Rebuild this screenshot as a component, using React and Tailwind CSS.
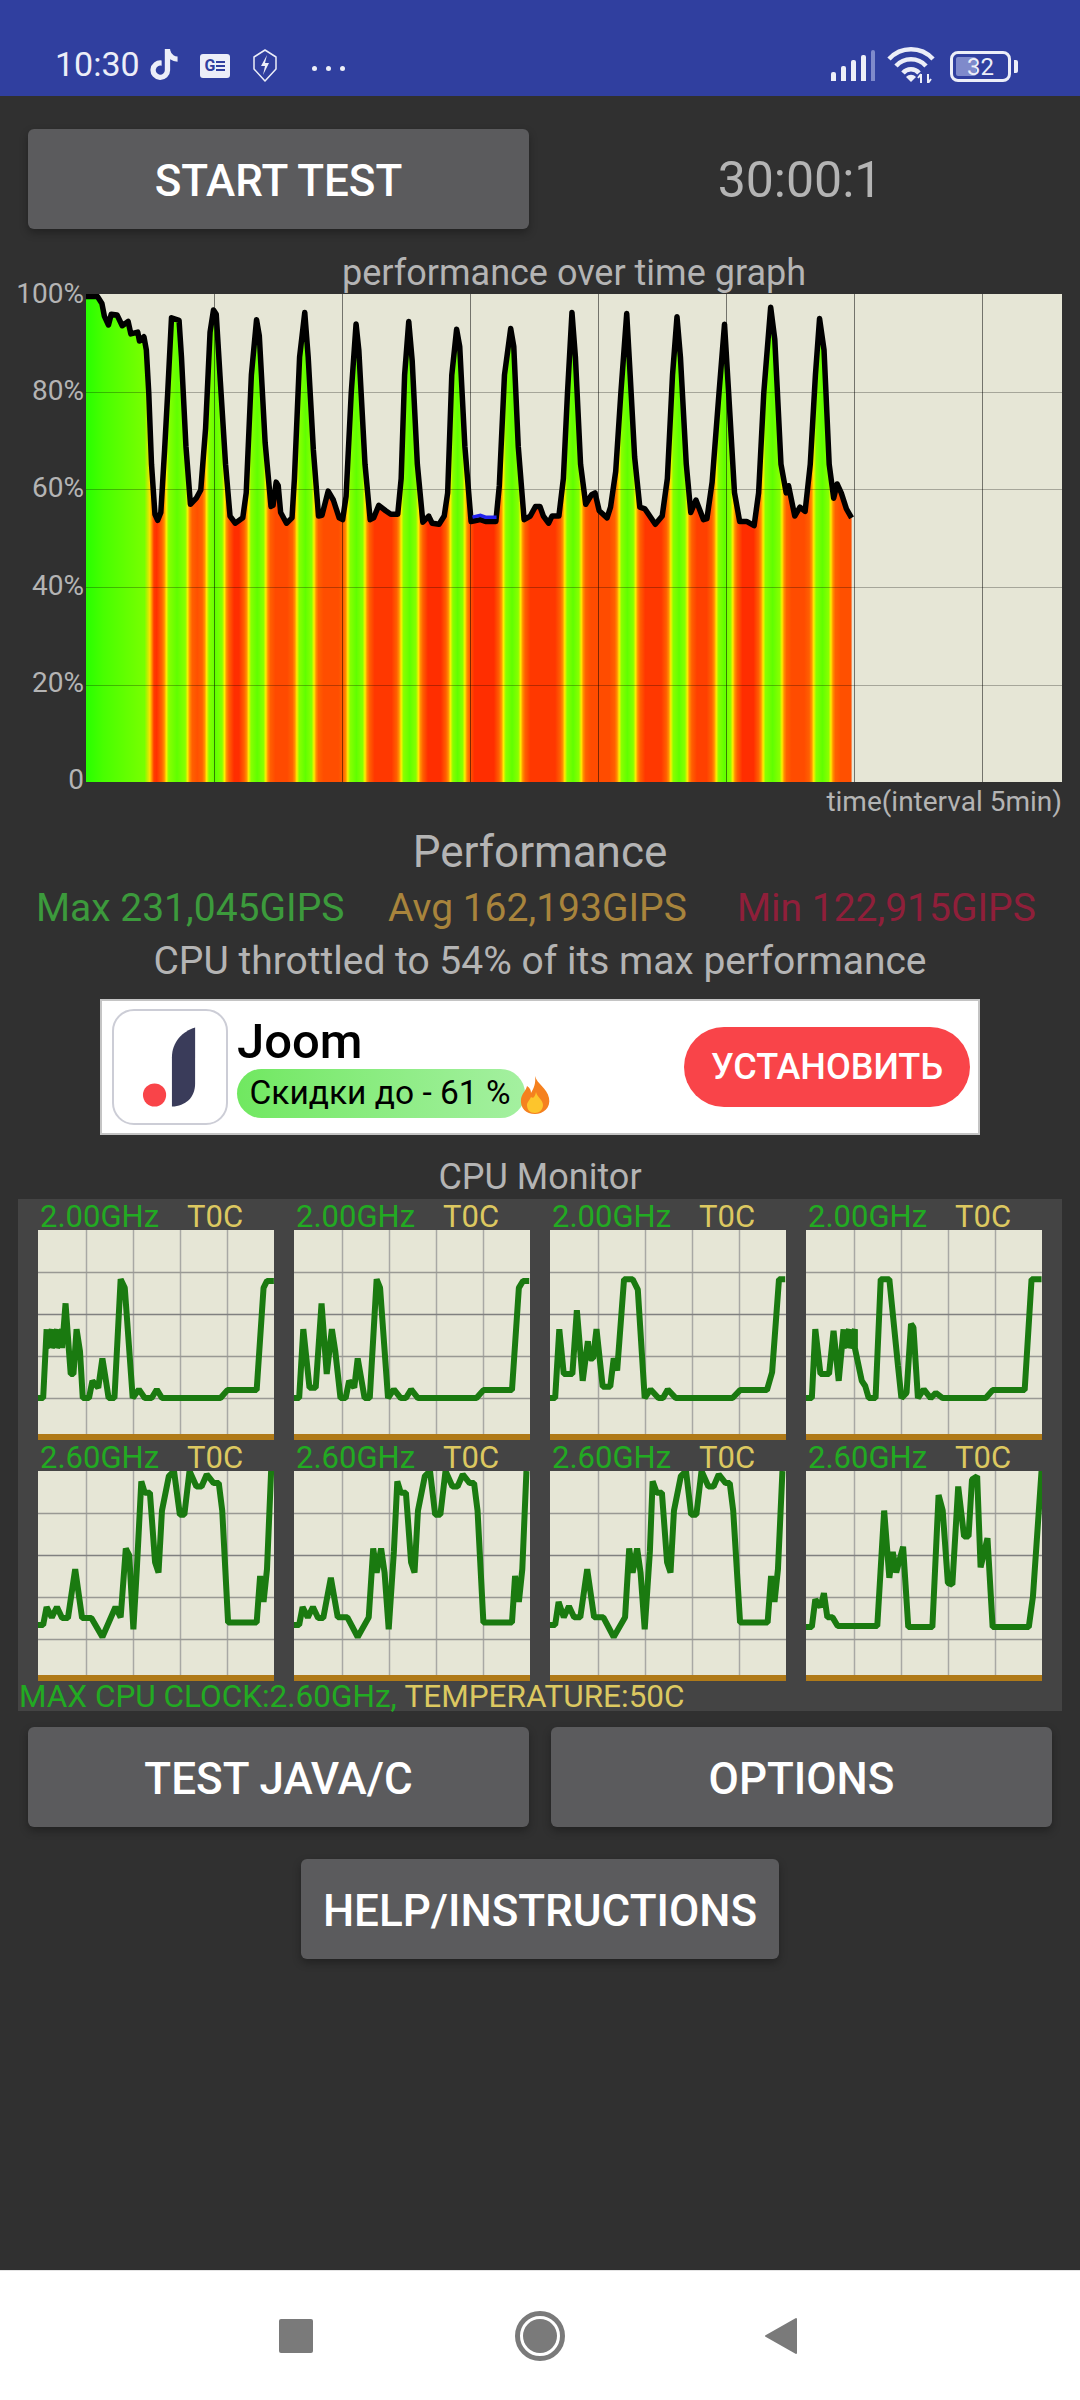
import { FaTiktok } from 'react-icons/fa'

const left = [249,130,283,130,296,150,303,185,315,210,323,180,340,182,355,212,372,200,380,235,400,230,405,255,418,243,425,280,432,400,440,600,450,740,458,757,467,735,478,560,487,400,498,190,520,197,527,300,540,550,553,712,570,695,583,672,597,500,610,230,620,168,628,180,640,370,655,600,668,745,683,765,705,750,715,680,730,350,745,195,753,240,770,540,787,718,793,715,802,650,808,660,815,735,832,765,848,750,855,640,870,300,885,175,895,300,910,560,925,745,935,743,953,675,968,700,985,750,995,755,1005,690,1020,400,1034,207,1042,280,1060,600,1075,755,1085,750,1100,715,1120,730,1135,740,1155,740,1165,640,1175,350,1187,200,1197,310,1212,600,1228,762,1245,745,1255,765,1275,768,1290,745,1300,680,1312,350,1326,222,1335,270,1350,550,1368,760,1395,755,1410,760,1440,760,1450,660,1465,350,1483,220,1492,270,1505,550,1522,755,1540,745,1555,718]
const right = [0,718,10,745,25,765,35,745,55,745,68,640,80,400,93,175,103,300,118,600,133,712,150,685,160,680,172,730,195,750,205,720,220,620,235,400,252,178,262,350,275,580,290,720,305,725,335,768,355,745,370,640,385,350,398,187,408,300,425,600,438,735,453,700,465,730,475,755,485,752,500,650,520,400,536,208,548,400,565,680,580,760,600,760,622,772,635,680,650,400,670,160,682,250,700,600,715,680,722,660,740,745,755,720,770,732,785,600,800,350,812,192,825,280,840,600,853,695,863,655,875,680,890,725,905,750]

// yellow flank left, yellow flank right, colour of the valley after it
const bands = [
  [483, 545, '#ff5000'], [600, 652, '#ff2e00'], [722, 772, '#ff4a00'], [862, 912, '#ff4e00'],
  [1010, 1060, '#ff3800'], [1165, 1215, '#ff2e00'], [1308, 1350, '#ff2e00'], [1462, 1512, '#ff3800'],
  [1640, 1688, '#ff4c00'], [1798, 1846, '#ff3800'], [1948, 1996, '#ff4000'], [2080, 2128, '#ff2e00'],
  [2216, 2271, '#ff4c00'], [2363, 2413, '#ff5000'],
]

const toPlot = (zx, zy) => [zx / 2.904 - 86, 250 + zy / 2.8 - 294]

function perfLine() {
  const pts = []
  for (let i = 0; i < left.length; i += 2) pts.push(toPlot(left[i], left[i + 1]))
  for (let i = 0; i < right.length; i += 2) pts.push(toPlot(right[i] + 1568, right[i + 1]))
  return pts
}

function stops() {
  const out = [[249, '#28ff00'], [300, '#48ff00'], [420, '#78ff00'], [435, '#ffe000'], [447, '#ff3c00']]
  let valley = '#ff3000'
  bands.forEach(([a, b, after]) => {
    out.push([a - 28, valley], [a - 13, '#ff6000'], [a - 6, '#ff9000'], [a, '#ffee00'], [a + 7, '#88ff00'], [(a + b) / 2, '#60ff00'], [b - 7, '#88ff00'], [b, '#ffee00'], [b + 6, '#ff9000'], [b + 13, '#ff6000'], [b + 28, after])
    valley = after
  })
  return out
}

function PerfGraph() {
  const pts = perfLine()
  const line = pts.map((p) => p.join(',')).join(' ')
  const endX = pts[pts.length - 1][0]
  const fill = `0,488 ${line} ${endX},488`
  const gridY = [98, 195, 293, 391]
  const gridX = [128, 256, 384, 512, 640, 768, 896]
  return (
    <svg width="976" height="488" viewBox="0 0 976 488" className="block bg-[#e6e6d6]">
      <defs>
        <linearGradient id="heat" gradientUnits="userSpaceOnUse" x1="0" x2="768" y1="0" y2="0">
          {stops().map(([zx, c], i) => (
            <stop key={i} offset={(zx / 2.904 - 86) / 768} stopColor={c} />
          ))}
        </linearGradient>
      </defs>
      <polygon points={fill} fill="url(#heat)" />
      {gridY.map((y) => (
        <line key={y} x1="0" x2="976" y1={y + 0.5} y2={y + 0.5} stroke="#000" strokeOpacity="0.28" />
      ))}
      {gridX.map((x) => (
        <line key={x} x1={x + 0.5} x2={x + 0.5} y1="0" y2="488" stroke="#000" strokeOpacity="0.5" />
      ))}
      <polyline points={line} fill="none" stroke="#000" strokeWidth="5.5" strokeLinejoin="round" />
      <polyline points={[[1372, 748], [1395, 743], [1410, 748], [1442, 748]].map(([a, b]) => toPlot(a, b).join(',')).join(' ')} fill="none" stroke="#2222ee" strokeWidth="3.5" />
    </svg>
  )
}

const cpuCells = [
  [110, 117, [110,605,125,605,135,405,135,460,150,405,150,460,165,405,165,460,180,405,180,460,190,330,200,470,205,535,213,535,222,405,232,470,240,605,258,605,268,555,285,575,297,490,305,540,315,605,332,605,350,260,362,285,385,605,403,580,420,605,440,605,455,580,470,605,640,605,660,582,745,582,765,285,775,265,795,265]],
  [855, 117, [855,605,870,605,882,405,900,575,918,575,935,330,950,535,965,405,975,470,990,605,1005,605,1015,555,1030,575,1040,490,1060,605,1075,605,1095,260,1105,285,1128,605,1145,580,1165,605,1180,605,1195,580,1215,605,1385,605,1405,582,1488,582,1508,285,1520,265,1538,265]],
  [30, 117, [30,605,45,605,57,405,70,535,95,535,108,350,125,555,140,440,145,490,155,490,165,405,183,572,205,572,215,490,225,525,245,260,270,260,285,290,305,605,322,580,345,605,358,605,372,580,395,605,560,605,582,582,660,582,675,530,695,260,713,260]],
  [773, 117, [773,605,790,605,800,405,815,535,840,535,853,410,868,555,882,405,882,460,898,405,898,460,915,405,915,460,935,555,945,570,955,605,975,605,990,260,1015,260,1040,510,1050,605,1065,590,1078,390,1085,400,1098,605,1115,580,1135,605,1150,590,1170,605,1295,605,1315,582,1408,582,1428,260,1457,260]],
  [110, 815, [110,1262,125,1262,135,1210,150,1240,165,1210,180,1242,197,1242,218,1100,238,1242,265,1242,297,1297,335,1210,350,1240,365,1040,375,1060,387,1275,397,1100,410,845,420,878,435,878,450,1080,460,1110,470,930,490,830,505,815,522,942,535,942,550,815,570,860,585,860,600,825,620,850,635,850,645,930,662,1255,745,1255,755,1120,765,1195,775,1100,787,815]],
  [855, 815, [855,1262,870,1262,880,1210,895,1240,910,1210,925,1242,940,1242,962,1125,982,1240,1010,1240,1040,1297,1072,1240,1085,1040,1095,1110,1108,1040,1118,1110,1130,1275,1145,1050,1155,845,1165,878,1180,878,1195,1080,1205,1110,1215,930,1235,830,1250,815,1265,942,1280,942,1295,815,1315,860,1330,860,1345,825,1365,850,1378,850,1388,930,1405,1255,1488,1255,1497,1120,1508,1195,1518,1100,1530,815]],
  [30, 815, [30,1262,45,1262,55,1195,70,1240,85,1208,100,1240,118,1240,138,1100,158,1240,185,1240,215,1297,248,1240,260,1040,270,1110,283,1040,293,1110,305,1275,320,1050,328,845,340,878,355,878,370,1080,380,1110,390,930,410,830,425,815,440,942,455,942,470,815,490,860,505,860,520,825,540,850,552,850,562,930,582,1255,662,1255,672,1120,682,1195,692,1100,705,815]],
  [773, 815, [773,1268,790,1268,800,1188,815,1210,825,1170,835,1240,850,1240,865,1265,980,1265,1000,930,1015,1125,1025,1050,1035,1110,1055,1035,1070,1268,1140,1268,1158,885,1170,930,1185,1140,1198,1145,1215,860,1232,1005,1245,1005,1255,840,1270,830,1280,1095,1300,1010,1315,1268,1420,1268,1432,1180,1457,815]],
]

function CpuCell({ x0, y0, data, freq }) {
  const pts = []
  for (let i = 0; i < data.length; i += 2) {
    pts.push(`${(data[i] - x0) / 2.904},${(data[i + 1] - y0) / 2.904}`)
  }
  return (
    <div className="w-[236px]">
      <div className="h-[31px] flex items-center pl-[2px] pt-[3px] text-[31px] leading-none">
        <span className="w-[147px] text-[#22aa22]">{freq}</span>
        <span className="text-[#dcc860]">T0C</span>
      </div>
      <svg width="236" height="204" viewBox="0 0 236 204" className="block bg-[#e6e6d6]">
        {[48, 95, 142, 189].map((x) => (
          <line key={x} x1={x + 0.5} x2={x + 0.5} y1="0" y2="204" stroke="#a8a8a4" strokeWidth="1.5" />
        ))}
        {[42, 84, 126, 168].map((y) => (
          <line key={y} x1="0" x2="236" y1={y + 0.5} y2={y + 0.5} stroke={y === 84 ? '#808080' : '#999994'} strokeWidth="1.5" />
        ))}
        <polyline points={pts.join(' ')} fill="none" stroke="#1a7a10" strokeWidth="6" strokeLinejoin="bevel" />
      </svg>
      <div className="h-[6px] bg-[#b07a18]" />
    </div>
  )
}

function GreyButton({ children, className }) {
  return (
    <button className={`h-[100px] rounded-[6px] bg-[#5b5b5d] text-white text-[44px] font-medium pt-[3px] shadow-[0_4px_8px_rgba(0,0,0,0.3)] flex items-center justify-center ${className}`}>
      {children}
    </button>
  )
}

function StatusBar() {
  return (
    <div className="h-[96px] shrink-0 bg-[#303f9f] text-[#eceef8] flex items-end pb-[15px] pl-[55px] pr-[62px]">
      <span className="text-[34px] leading-[34px] w-[95px]">10:30</span>
      <FaTiktok className="w-[28px] h-[31px] mb-[1px]" />
      {/* news badge */}
      <div className="ml-[22px] mb-[3px] w-[30px] h-[24px] rounded-[3px] bg-[#eceef8] flex items-center justify-center gap-[1px] text-[#303f9f]">
        <span className="text-[16px] leading-none font-bold">G</span>
        <div className="w-[9px] flex flex-col gap-[2px]">
          <div className="h-[2px] bg-[#303f9f]" />
          <div className="h-[2px] bg-[#303f9f]" />
          <div className="h-[2px] bg-[#303f9f]" />
        </div>
      </div>
      <svg width="24" height="33" viewBox="0 0 24 33" className="ml-[23px] -mb-[1px]" fill="none">
        <path d="M12 1 L23 8 V20 L12 32 L1 20 V8 Z" stroke="#eceef8" strokeWidth="1.5" strokeLinejoin="round" />
        <path d="M14 6 L8 17 H12 L10 26 L16 14 H12 Z" fill="#eceef8" />
      </svg>
      <div className="ml-[35px] mb-[10px] flex gap-[9px]">
        <div className="w-[5px] h-[5px] rounded-full bg-[#eceef8]" />
        <div className="w-[5px] h-[5px] rounded-full bg-[#eceef8]" />
        <div className="w-[5px] h-[5px] rounded-full bg-[#eceef8]" />
      </div>
      <div className="ml-auto flex items-end h-[32px] gap-[5px]">
        <div className="w-[5px] h-[9px] rounded-t-[2px] bg-[#eceef8]" />
        <div className="w-[5px] h-[15px] rounded-t-[2px] bg-[#eceef8]" />
        <div className="w-[5px] h-[21px] rounded-t-[2px] bg-[#eceef8]" />
        <div className="w-[5px] h-[26px] rounded-t-[2px] bg-[#eceef8]" />
        <div className="w-[4px] h-[31px] rounded-t-[2px] bg-[#7f8acb]" />
      </div>
      <svg width="48" height="36" viewBox="0 0 48 36" className="ml-[12px] -mb-[2px]" fill="none" stroke="#eceef8" strokeWidth="4.5">
        <path d="M2 12 C14 -1 34 -1 46 12" />
        <path d="M9 19 C17 10 31 10 39 19" />
        <path d="M16 26 C20 21 28 21 32 26" />
        <path d="M19 30 L24 35 L29 30 C26 27 22 27 19 30 Z" fill="#eceef8" stroke="none" />
        <path d="M34 36 V27 M34 27 L31 31 M41 27 V36 M41 36 L44 32" strokeWidth="2" />
      </svg>
      <div className="ml-[15px] flex items-center">
        <div className="relative w-[61px] h-[31px] rounded-[8px] border-[3px] border-[#eceef8] flex items-center justify-center -mb-[1px]">
          <div className="absolute left-[3px] top-[3px] bottom-[3px] w-[20px] rounded-[2px] bg-[#7f8acb]" />
          <span className="relative text-[24px] leading-none">32</span>
        </div>
        <div className="ml-[3px] w-[4px] h-[13px] rounded-r-[2px] bg-[#eceef8]" />
      </div>
    </div>
  )
}

function AdBanner() {
  return (
    <div className="ml-[100px] mt-[14px] w-[880px] h-[136px] bg-white border-2 border-[#c4c4c4] flex items-center pl-[10px] pr-[8px]">
      <div className="w-[116px] h-[116px] rounded-[22px] border-2 border-[#cccdd6] shrink-0">
        <svg width="112" height="112" viewBox="112 1010 116 116">
          <circle cx="154" cy="1097" r="12" fill="#f94449" />
          <path d="M196 1027 C183 1031 172 1042 172 1058 L172 1109 C186 1108 196 1100 196 1085 Z" fill="#3a3c5a" />
        </svg>
      </div>
      <div className="ml-[9px] w-[446px] shrink-0 flex flex-col items-start text-black">
        <span className="text-[49px] leading-[50px] font-medium pt-[1px]">Joom</span>
        <div className="flex items-center mt-[2px]">
          <div className="w-[288px] h-[49px] rounded-full bg-gradient-to-r from-[#70e860] to-[#a4f0a0] flex items-center justify-center text-[33.5px] pr-[2px]">
            Скидки до - 61 %
          </div>
          <svg width="36" height="38" viewBox="0 0 36 38" className="-ml-[8px] mt-[2px]">
            <path d="M18 0 C20 8 30 12 32 22 C34 32 26 38 18 38 C9 38 3 32 4 23 C5 17 9 15 10 10 C13 12 14 14 14 17 C17 12 19 7 18 0 Z" fill="#f5811f" />
            <path d="M19 16 C20 21 26 24 26 29 C26 34 22 37 18 37 C13 37 10 34 10 29 C10 26 13 24 14 21 C16 23 18 21 19 16 Z" fill="#fdc52c" />
          </svg>
        </div>
      </div>
      <div className="ml-auto w-[286px] h-[80px] rounded-full bg-[#f94449] text-white text-[36px] font-medium flex items-center justify-center">
        УСТАНОВИТЬ
      </div>
    </div>
  )
}

function NavBar() {
  return (
    <div className="mt-auto h-[130px] shrink-0 bg-white border-t border-[#e4e4e4] flex items-center pl-[279px] pr-[283px]">
      <div className="w-[34px] h-[34px] rounded-[2px] bg-[#7a7a7a]" />
      <svg width="50" height="50" viewBox="0 0 50 50" className="ml-[202px]">
        <circle cx="25" cy="25" r="22.5" fill="none" stroke="#7a7a7a" strokeWidth="5" />
        <circle cx="25" cy="25" r="17" fill="#7a7a7a" />
      </svg>
      <svg width="32" height="38" viewBox="0 0 32 38" className="ml-auto">
        <path d="M31 2 V36 L1 19 Z" fill="#7a7a7a" stroke="#7a7a7a" strokeWidth="2" strokeLinejoin="round" />
      </svg>
    </div>
  )
}

export default function App() {
  const yLabels = ['100%', '80%', '60%', '40%', '20%', '0']
  return (
    <div className="w-[1080px] h-[2400px] bg-[#303030] flex flex-col font-['Roboto',sans-serif]">
      <StatusBar />

      <div className="flex mt-[33px] pl-[28px]">
        <GreyButton className="w-[501px]">START TEST</GreyButton>
        <div className="ml-[17px] w-[508px] pt-[3px] flex items-center justify-center text-[50px] text-[#b4b4b4]">30:00:1</div>
      </div>

      <div className="ml-[86px] w-[976px] mt-[23px] h-[42px] text-center text-[36px] leading-[42px] text-[#b4b4b4]">
        performance over time graph
      </div>
      <div className="flex h-[488px]">
        <div className="w-[86px] h-[516px] -mt-[15px] pr-[2px] flex flex-col justify-between text-right text-[28px] leading-[30px] text-[#b4b4b4]">
          {yLabels.map((l) => <span key={l}>{l}</span>)}
        </div>
        <PerfGraph />
      </div>
      <div className="pr-[18px] h-[40px] text-right text-[28px] leading-[40px] text-[#b4b4b4]">time(interval 5min)</div>

      <div className="text-center text-[44px] leading-[50px] mt-[5px] text-[#b4b4b4]">Performance</div>
      <div className="flex h-[50px] pt-[2px] items-center text-[39px] mt-[5px] pl-[36px]">
        <span className="w-[352px] text-[#3c9a3c]">Max 231,045GIPS</span>
        <span className="w-[349px] text-[#a8843c]">Avg 162,193GIPS</span>
        <span className="text-[#8f1f3a]">Min 122,915GIPS</span>
      </div>
      <div className="text-center text-[39px] leading-[50px] mt-[3px] pt-[1px] h-[50px] text-[#b4b4b4]">CPU throttled to 54% of its max performance</div>

      <AdBanner />

      <div className="text-center text-[36px] leading-[40px] mt-[20px] pt-[2px] h-[40px] text-[#b4b4b4]">CPU Monitor</div>
      <div className="mt-[4px] ml-[18px] w-[1044px] h-[512px] bg-[#444444]">
        <div className="grid grid-cols-4 gap-x-[20px] pl-[20px] w-[1024px]">
          {cpuCells.map(([x0, y0, data], i) => (
            <CpuCell key={i} x0={x0} y0={y0} data={data} freq={i < 4 ? '2.00GHz' : '2.60GHz'} />
          ))}
        </div>
        <div className="h-[30px] pl-[1px] pt-[2px] flex items-center text-[31.5px] leading-none whitespace-pre">
          <span className="text-[#22aa22]">MAX CPU CLOCK:2.60GHz, </span>
          <span className="text-[#dcc860]">TEMPERATURE:50C</span>
        </div>
      </div>

      <div className="flex mt-[16px] pl-[28px] gap-[22px]">
        <GreyButton className="w-[501px]">TEST JAVA/C</GreyButton>
        <GreyButton className="w-[501px]">OPTIONS</GreyButton>
      </div>
      <div className="flex justify-center mt-[32px]">
        <GreyButton className="w-[478px]">HELP/INSTRUCTIONS</GreyButton>
      </div>

      <NavBar />
    </div>
  )
}
